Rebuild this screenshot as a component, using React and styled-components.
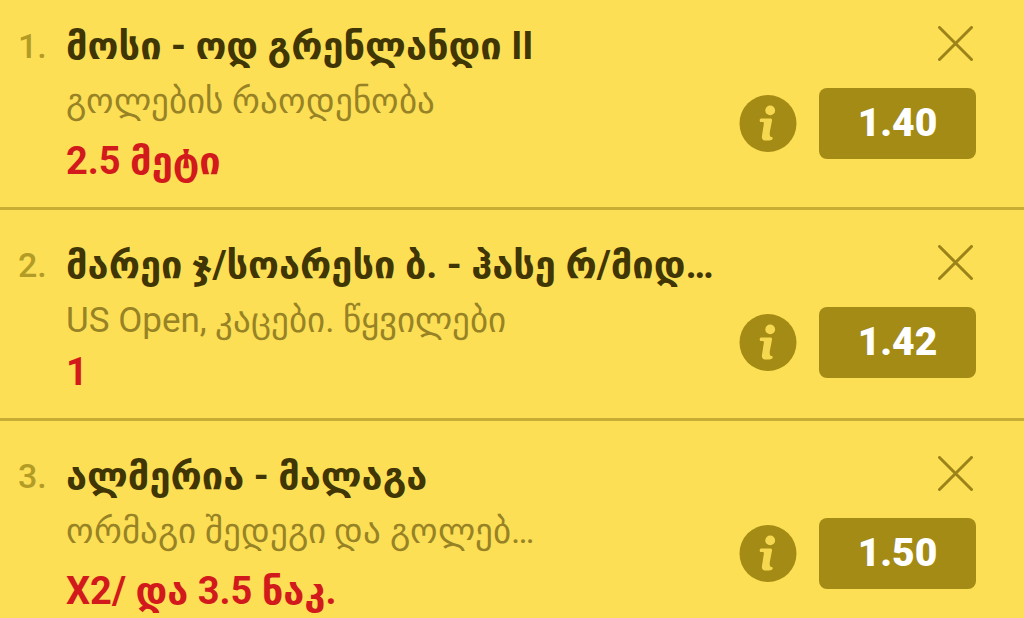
import React from "react";
import styled, { createGlobalStyle } from "styled-components";

const Global = createGlobalStyle`
  * { box-sizing: border-box; }
  body {
    margin: 0;
    background: #fddf55;
    font-family: Roboto, sans-serif;
  }
  button {
    margin: 0;
    padding: 0;
    border: 0;
    background: none;
    font-family: inherit;
    cursor: pointer;
  }
`;

const Slip = styled.ol`
  margin: 0;
  padding: 0;
  list-style: none;
`;

const Bet = styled.li`
  display: flex;
  padding: 29px 48px 24px 18px;
  border-bottom: 3px solid #c8ad34;

  &:first-child {
    padding-top: 20px;
  }

  &:last-child {
    padding-bottom: 0;
    border-bottom: 0;
  }
`;

const Position = styled.span`
  flex: 0 0 48px;
  font-size: 34px;
  font-weight: 500;
  line-height: 52px;
  color: #b39c26;
`;

const Details = styled.div`
  flex: 1;
  min-width: 0;
  white-space: nowrap;
`;

const Match = styled.h2`
  margin: 0;
  font-family: Roboto, "DejaVu Sans", sans-serif;
  font-size: 38px;
  font-weight: 700;
  line-height: 52px;
  color: #403505;
`;

const Market = styled.p`
  margin: 0;
  font-size: 35px;
  line-height: 59px;
  color: #978325;
`;

const Pick = styled.p`
  margin: ${(p) => (p.$compact ? 0 : 8)}px 0 0;
  font-family: Roboto, "DejaVu Sans", sans-serif;
  font-size: 38px;
  font-weight: 700;
  line-height: 44px;
  color: #d2191c;
`;

const Side = styled.div`
  display: flex;
  flex-direction: column;
  align-items: flex-end;
  gap: 27px;
  margin-top: 6px;
`;

const CloseButton = styled.button`
  width: 38px;
  height: 35px;
`;

const Actions = styled.div`
  display: flex;
  align-items: center;
  gap: 22px;
`;

const InfoButton = styled.button`
  width: 58px;
  height: 58px;
`;

const Odds = styled.button`
  && {
    width: 157px;
    height: 71px;
    padding-bottom: 2px;
    border-radius: 8px;
    background: #a48b15;
    font-size: 39px;
    font-weight: 900;
    color: #fff;
  }
`;

const Drawing = styled.svg`
  display: block;
`;

const CloseIcon = () => (
  <Drawing width="35" height="35" viewBox="0 0 35 35" aria-hidden="true">
    <path d="M1.5 1.5 33.5 33.5M33.5 1.5 1.5 33.5" fill="none" stroke="#9b8319" strokeWidth="3" strokeLinecap="round" />
  </Drawing>
);

const InfoIcon = () => (
  <Drawing width="58" height="58" viewBox="0 0 58 58" aria-hidden="true">
    <circle cx="29" cy="28.5" r="28.5" fill="#a48b15" />
    <circle cx="31.2" cy="15.4" r="4.9" fill="#f5d850" />
    <path
      d="M22 23.6h9.4c1.3 0 1.8.8 1.6 2.2l-2.1 10.6c-.4 2.4-.3 4.3.6 5.3.8.3 2.2.2 2.2 1.4 0 1.9-1.6 2.5-6.5 2.5-3.7 0-4.7-1.7-4.2-4.9l1.8-11.6c.2-1.3-.2-2-1.2-2h-1.9c-1.4 0-1.4-3.2.3-3.5z"
      fill="#f5d850"
    />
  </Drawing>
);

const bets = [
  { match: "მოსი - ოდ გრენლანდი II", market: "გოლების რაოდენობა", pick: "2.5 მეტი", odds: "1.40" },
  { match: "მარეი ჯ/სოარესი ბ. - ჰასე რ/მიდ…", market: "US Open, კაცები. წყვილები", pick: "1", odds: "1.42", compact: true },
  { match: "ალმერია - მალაგა", market: "ორმაგი შედეგი და გოლებ…", pick: "X2/ და 3.5 ნაკ.", odds: "1.50" },
];

export default function App() {
  return (
    <main>
      <Global />
      <Slip>
        {bets.map((bet, i) => (
          <Bet key={bet.match}>
            <Position>{i + 1}.</Position>
            <Details>
              <Match>{bet.match}</Match>
              <Market>{bet.market}</Market>
              <Pick $compact={bet.compact}>{bet.pick}</Pick>
            </Details>
            <Side>
              <CloseButton type="button" aria-label="წაშლა">
                <CloseIcon />
              </CloseButton>
              <Actions>
                <InfoButton type="button" aria-label="ინფორმაცია">
                  <InfoIcon />
                </InfoButton>
                <Odds type="button">{bet.odds}</Odds>
              </Actions>
            </Side>
          </Bet>
        ))}
      </Slip>
    </main>
  );
}
